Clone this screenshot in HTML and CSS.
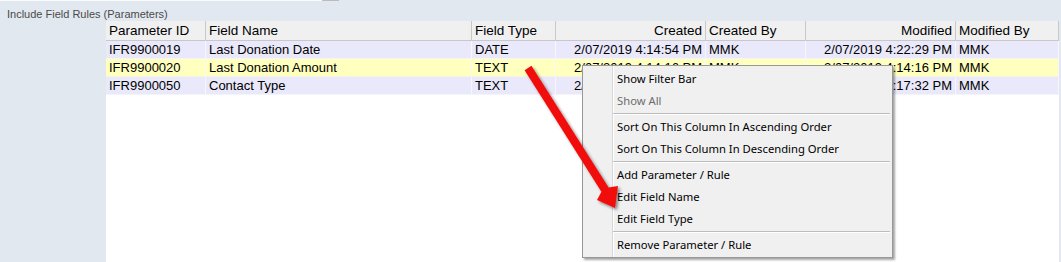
FILE: index.html
```html
<!DOCTYPE html>
<html lang="en">
<head>
    <meta charset="UTF-8">
    <title>Include Field Rules</title>
    <link rel="stylesheet" href="styles.css">
</head>
<body>
    <div class="topstrip">
        <div class="topstrip-white"></div>
        <div class="topstrip-thumb"></div>
    </div>
    <div class="panel-title">Include Field Rules (Parameters)</div>

    <div class="grid">
        <div class="row header">
            <div class="cell">Parameter ID</div>
            <div class="cell">Field Name</div>
            <div class="cell">Field Type</div>
            <div class="cell num">Created</div>
            <div class="cell">Created By</div>
            <div class="cell num">Modified</div>
            <div class="cell">Modified By</div>
        </div>
        <div class="row odd">
            <div class="cell">IFR9900019</div>
            <div class="cell">Last Donation Date</div>
            <div class="cell">DATE</div>
            <div class="cell num">2/07/2019 4:14:54 PM</div>
            <div class="cell">MMK</div>
            <div class="cell num">2/07/2019 4:22:29 PM</div>
            <div class="cell">MMK</div>
        </div>
        <div class="row selected">
            <div class="cell">IFR9900020</div>
            <div class="cell">Last Donation Amount</div>
            <div class="cell">TEXT</div>
            <div class="cell num">2/07/2019 4:14:16 PM</div>
            <div class="cell">MMK</div>
            <div class="cell num">2/07/2019 4:14:16 PM</div>
            <div class="cell">MMK</div>
        </div>
        <div class="row odd">
            <div class="cell">IFR9900050</div>
            <div class="cell">Contact Type</div>
            <div class="cell">TEXT</div>
            <div class="cell num">2/07/2019 4:17:32 PM</div>
            <div class="cell">MMK</div>
            <div class="cell num">2/07/2019 4:17:32 PM</div>
            <div class="cell">MMK</div>
        </div>
    </div>

    <!-- context menu shown over the grid -->
    <div class="context-menu">
        <div class="menu-item">Show Filter Bar</div>
        <div class="menu-item disabled">Show All</div>
        <div class="menu-sep"></div>
        <div class="menu-item">Sort On This Column In Ascending Order</div>
        <div class="menu-item">Sort On This Column In Descending Order</div>
        <div class="menu-sep"></div>
        <div class="menu-item">Add Parameter / Rule</div>
        <div class="menu-item">Edit Field Name</div>
        <div class="menu-item">Edit Field Type</div>
        <div class="menu-sep"></div>
        <div class="menu-item">Remove Parameter / Rule</div>
    </div>

    <svg class="arrow" width="1061" height="262" viewBox="0 0 1061 262">
        <defs>
            <filter id="shadow" x="-20%" y="-20%" width="140%" height="140%">
                <feDropShadow dx="2" dy="2" stdDeviation="1.5" flood-color="#000" flood-opacity="0.45"/>
            </filter>
        </defs>
        <polygon filter="url(#shadow)" fill="#f20d0d"
                 points="524.6,70.2 531.4,65.8 608.6,187.4 618,186 615,208 597,200 601.4,191.8"/>
    </svg>
</body>
</html>
```

FILE: styles.css
```css
body {
    margin: 0;
    width: 1061px;
    height: 262px;
    overflow: hidden;
    position: relative;
    background: #e1e8ef;
    font-family: "Liberation Sans", Arial, sans-serif;
    color: #000;
}
.topstrip {
    display: flex;
    height: 1px;
}
.topstrip-white {
    width: 322px;
    background: #fbfcfd;
}
.topstrip-thumb {
    width: 17px;
    background: #bcbcbc;
}
.panel-title {
    font-size: 11px;
    color: #4a4a4a;
    padding: 6px 0 0 7px;
    height: 14px;
    line-height: 14px;
}
.grid {
    margin-left: 106px;
    width: 953px;
    height: 241px;
    background: #fff;
    font-size: 13px;
}
.row {
    display: grid;
    grid-template-columns: 100px 266px 84px 150px 100px 150px 103px;
    height: 18px;
    line-height: 18px;
}
.row.header {
    height: 19px;
    line-height: 19px;
    font-size: 13.5px;
    background: #f0f0f0;
    border-bottom: 1px solid #c8c8c8;
}
.row.odd {
    background: #e9e9fb;
    border-bottom: 1px solid #f4f4fb;
    height: 17px;
    line-height: 17px;
}
.row.selected {
    background: #ffffbe;
    border-bottom: 1px solid #f4f4e0;
    height: 17px;
    line-height: 17px;
}
.cell {
    padding: 0 3px;
    white-space: nowrap;
    overflow: hidden;
    border-right: 1px solid #f6f6fc;
}
.header .cell {
    border-right: 1px solid #c8c8c8;
}
.cell.num {
    text-align: right;
}
.context-menu {
    position: absolute;
    left: 582px;
    top: 65px;
    width: 309px;
    padding: 2px 0 1px;
    background: #f0f0f0 linear-gradient(to right, transparent 29px, #d7d7d7 29px, #d7d7d7 30px, #fff 30px, #fff 31px, transparent 31px);
    border: 1px solid #979797;
    box-shadow: 2px 2px 2px rgba(0, 0, 0, 0.35);
    font-family: "Noto Sans", "Open Sans", sans-serif;
    font-size: 11.25px;
}
.menu-item {
    height: 22px;
    line-height: 22px;
    padding-left: 34px;
    color: #000;
    white-space: nowrap;
}
.menu-item.disabled {
    color: #6d6d6d;
}
.menu-sep {
    height: 1px;
    margin: 1px 2px 1px 30px;
    border-bottom: 1px solid #fff;
    background: #bdbdbd;
}
.arrow {
    position: absolute;
    left: 0;
    top: 0;
    pointer-events: none;
}
```
